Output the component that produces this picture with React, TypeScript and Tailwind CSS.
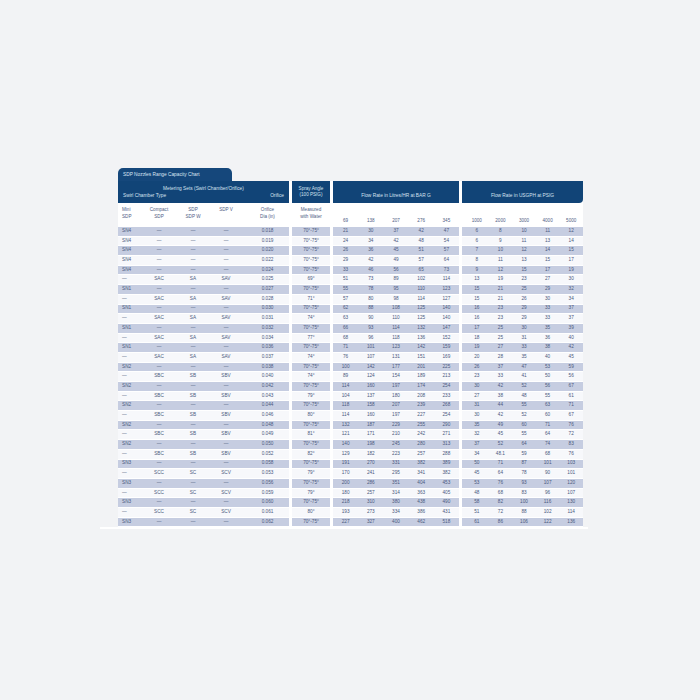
import React from 'react';

type Row = {
  mini: string;
  compact: string;
  sdp: string;
  sdpv: string;
  orifice: string;
  angle: string;
  litres: (string | number)[];
  usgph: (string | number)[];
};

const A = '70°-75°';

// mini, compact, sdp, sdpv, orifice, angle, litres/hr, usgph
const raw: [string, string, string, string, string, string, (string | number)[], (string | number)[]][] = [
  ['SN4', '—', '—', '—', '0.018', A, [21, 30, 37, 42, 47], [6, 8, 10, 11, 12]],
  ['SN4', '—', '—', '—', '0.019', A, [24, 34, 42, 48, 54], [6, 9, 11, 13, 14]],
  ['SN4', '—', '—', '—', '0.020', A, [26, 36, 45, 51, 57], [7, 10, 12, 14, 15]],
  ['SN4', '—', '—', '—', '0.022', A, [29, 42, 49, 57, 64], [8, 11, 13, 15, 17]],
  ['SN4', '—', '—', '—', '0.024', A, [33, 46, 56, 65, 73], [9, 12, 15, 17, 19]],
  ['—', 'SAC', 'SA', 'SAV', '0.025', '69°', [51, 73, 89, 102, 114], [13, 19, 23, 27, 30]],
  ['SN1', '—', '—', '—', '0.027', A, [55, 78, 95, 110, 123], [15, 21, 25, 29, 32]],
  ['—', 'SAC', 'SA', 'SAV', '0.028', '71°', [57, 80, 98, 114, 127], [15, 21, 26, 30, 34]],
  ['SN1', '—', '—', '—', '0.030', A, [62, 88, 108, 125, 140], [16, 23, 29, 33, 37]],
  ['—', 'SAC', 'SA', 'SAV', '0.031', '74°', [63, 90, 110, 125, 140], [16, 23, 29, 33, 37]],
  ['SN1', '—', '—', '—', '0.032', A, [66, 93, 114, 132, 147], [17, 25, 30, 35, 39]],
  ['—', 'SAC', 'SA', 'SAV', '0.034', '77°', [68, 96, 118, 136, 152], [18, 25, 31, 36, 40]],
  ['SN1', '—', '—', '—', '0.036', A, [71, 101, 123, 142, 159], [19, 27, 33, 38, 42]],
  ['—', 'SAC', 'SA', 'SAV', '0.037', '74°', [76, 107, 131, 151, 169], [20, 28, 35, 40, 45]],
  ['SN2', '—', '—', '—', '0.038', A, [100, 142, 177, 201, 225], [26, 37, 47, 53, 59]],
  ['—', 'SBC', 'SB', 'SBV', '0.040', '74°', [89, 124, 154, 189, 213], [23, 33, 41, 50, 56]],
  ['SN2', '—', '—', '—', '0.042', A, [114, 160, 197, 174, 254], [30, 42, 52, 56, 67]],
  ['—', 'SBC', 'SB', 'SBV', '0.043', '79°', [104, 137, 180, 208, 233], [27, 38, 48, 55, 61]],
  ['SN2', '—', '—', '—', '0.044', A, [118, 158, 207, 239, 268], [31, 44, 55, 63, 71]],
  ['—', 'SBC', 'SB', 'SBV', '0.046', '80°', [114, 160, 197, 227, 254], [30, 42, 52, 60, 67]],
  ['SN2', '—', '—', '—', '0.048', A, [132, 187, 229, 255, 290], [35, 49, 60, 71, 76]],
  ['—', 'SBC', 'SB', 'SBV', '0.049', '81°', [121, 171, 210, 242, 271], [32, 45, 55, 64, 72]],
  ['SN2', '—', '—', '—', '0.050', A, [140, 198, 245, 280, 313], [37, 52, 64, 74, 83]],
  ['—', 'SBC', 'SB', 'SBV', '0.052', '82°', [129, 182, 223, 257, 288], [34, '48.1', 59, 68, 76]],
  ['SN3', '—', '—', '—', '0.058', A, [191, 270, 331, 382, 389], [50, 71, 87, 101, 103]],
  ['—', 'SCC', 'SC', 'SCV', '0.053', '79°', [170, 241, 295, 341, 382], [45, 64, 78, 90, 101]],
  ['SN3', '—', '—', '—', '0.056', A, [200, 286, 351, 404, 453], [53, 76, 93, 107, 120]],
  ['—', 'SCC', 'SC', 'SCV', '0.059', '79°', [180, 257, 314, 363, 405], [48, 68, 83, 96, 107]],
  ['SN3', '—', '—', '—', '0.060', A, [218, 310, 380, 438, 490], [58, 82, 100, 116, 130]],
  ['—', 'SCC', 'SC', 'SCV', '0.061', '80°', [193, 273, 334, 386, 431], [51, 72, 88, 102, 114]],
  ['SN3', '—', '—', '—', '0.062', A, [227, 327, 400, 462, 518], [61, 86, 106, 122, 136]],
];

const rows: Row[] = raw.map(([mini, compact, sdp, sdpv, orifice, angle, litres, usgph]) => ({
  mini, compact, sdp, sdpv, orifice, angle, litres, usgph,
}));

const barPressures = [69, 138, 207, 276, 345];
const psiPressures = [1000, 2000, 3000, 4000, 5000];

const TableRow: React.FC<{ row: Row; shaded: boolean }> = ({ row, shaded }) => {
  const bg = shaded ? 'bg-[#c6cde1]' : 'bg-[#f7f8fb]';
  return (
    <div className="flex h-[9.7px] gap-[3px] border-b border-white text-[4.7px] leading-none text-[#4b5980]">
      <div className={`flex w-[171px] items-center ${bg}`}>
        <span className="w-[22px] pl-[4px]">{row.mini}</span>
        <span className="w-[38px] text-center">{row.compact}</span>
        <span className="w-[30px] text-center">{row.sdp}</span>
        <span className="w-[36px] text-center">{row.sdpv}</span>
        <span className="w-[45px] pl-[2px] text-center">{row.orifice}</span>
      </div>
      <div className={`flex w-[38px] items-center justify-center ${bg}`}>{row.angle}</div>
      <div className={`grid w-[126px] grid-cols-5 items-center text-center ${bg}`}>
        {row.litres.map((v, i) => (
          <span key={i}>{v}</span>
        ))}
      </div>
      <div className={`grid w-[121px] grid-cols-5 items-center pl-[3px] text-center ${bg}`}>
        {row.usgph.map((v, i) => (
          <span key={i}>{v}</span>
        ))}
      </div>
    </div>
  );
};

export default function App() {
  return (
    <div
      className="h-[700px] w-[700px] overflow-hidden bg-[#f2f3f5] pl-[118px] pt-[168px]"
      style={{ fontFamily: '"Liberation Sans", Arial, sans-serif' }}
    >
      <div className="w-[465px]">
        {/* tab */}
        <div className="flex h-[13px] w-[114px] items-center rounded-t-[5px] bg-[#15477b] pl-[5px] text-[4.8px] text-[#dbe6f3]">
          SDP Nozzles Range Capacity Chart
        </div>

        {/* group header */}
        <div className="flex h-[22px] gap-[3px] bg-white">
          <div className="flex w-[171px] flex-col justify-center bg-[#114477] px-[5px] text-[4.8px] leading-[7px] text-[#d6e2f0]">
            <span className="text-center">Metering Sets (Swirl Chamber/Orifice)</span>
            <div className="flex justify-between">
              <span>Swirl Chamber Type</span>
              <span>Orifice</span>
            </div>
          </div>
          <div className="flex w-[38px] flex-col items-center justify-center bg-[#114477] text-[4.6px] leading-[6.5px] text-[#d6e2f0]">
            <span>Spray Angle</span>
            <span>(100 PSIG)</span>
          </div>
          <div className="flex w-[126px] items-end justify-center bg-[#114477] pb-[4px] text-[4.8px] text-[#d6e2f0]">
            Flow Rate in Litres/HR at BAR G
          </div>
          <div className="flex w-[121px] items-end justify-center rounded-br-[4px] bg-[#114477] pb-[4px] text-[4.8px] text-[#d6e2f0]">
            Flow Rate in USGPH at PSIG
          </div>
        </div>

        {/* column header */}
        <div className="flex h-[24px] gap-[3px] bg-white pt-[4px] text-[4.6px] leading-[6.5px] text-[#4f5e85]">
          <div className="flex w-[171px]">
            <span className="w-[22px] pl-[4px]">Mini<br />SDP</span>
            <span className="w-[38px] text-center">Compact<br />SDP</span>
            <span className="w-[30px] text-center">SDP<br />SDP W</span>
            <span className="w-[36px] text-center">SDP V</span>
            <span className="w-[45px] pl-[2px] text-center">Orifice<br />Dia (in)</span>
          </div>
          <div className="w-[38px] text-center">Measured<br />with Water</div>
          <div className="grid w-[126px] grid-cols-5 items-end pb-[3px] text-center">
            {barPressures.map((p) => (
              <span key={p}>{p}</span>
            ))}
          </div>
          <div className="grid w-[121px] grid-cols-5 items-end pb-[3px] pl-[3px] text-center">
            {psiPressures.map((p) => (
              <span key={p}>{p}</span>
            ))}
          </div>
        </div>

        {/* body */}
        <div className="bg-white">
          {rows.map((row, i) => (
            <TableRow key={i} row={row} shaded={i % 2 === 0} />
          ))}
        </div>
      </div>
      <div className="-ml-[18px] h-[2px] w-[488px] bg-white" />
    </div>
  );
}
